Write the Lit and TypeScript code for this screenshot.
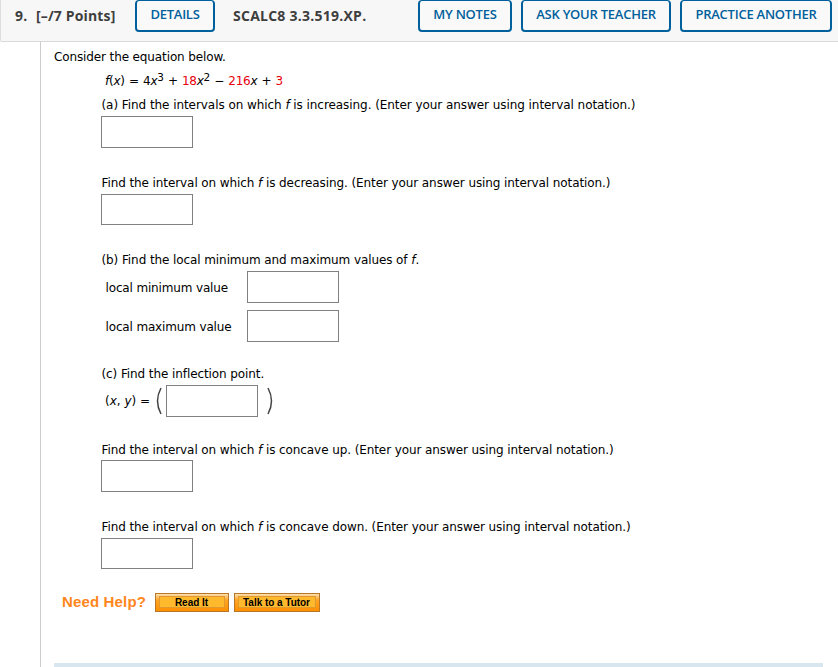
import { LitElement, html, css } from 'lit';
import { customElement, property } from 'lit/decorators.js';

@customElement('answer-box')
export class AnswerBox extends LitElement {
  @property({ type: Boolean, reflect: true }) short = false;

  static styles = css`
    :host {
      display: block;
      flex: none;
      width: 92px;
      height: 32px;
    }

    :host([short]) {
      height: 31px;
    }

    input {
      display: block;
      box-sizing: border-box;
      width: 100%;
      height: 100%;
      margin: 0;
      padding: 2px 4px;
      border: 1px solid #808080;
      border-radius: 0;
      background: #fff;
      font: 12px 'DejaVu Sans', sans-serif;
    }
  `;

  render() {
    return html`<input type="text" />`;
  }
}

@customElement('app-root')
export class AppRoot extends LitElement {
  static styles = css`
    :host {
      display: flex;
      flex-direction: column;
      height: 667px;
      overflow: hidden;
      background: #fff;
      color: #000;
      font: 12px/18px Verdana, 'DejaVu Sans', sans-serif;
      letter-spacing: -0.09px;
    }

    header {
      display: flex;
      flex: none;
      align-items: flex-start;
      box-sizing: border-box;
      height: 42px;
      padding-left: 14px;
      border-left: 1px solid #ddd;
      border-bottom: 1px solid #d8d8d8;
      border-bottom-left-radius: 2px;
      background: #f7f7f7;
      color: #3e3e3e;
      font: bold 14px/32px 'Open Sans', sans-serif;
      letter-spacing: 0.15px;
      white-space: nowrap;
    }

    .number {
      width: 21px;
    }

    .points {
      width: 99px;
    }

    .source {
      width: 185px;
      margin-left: 18px;
      letter-spacing: 0.25px;
    }

    .btn {
      box-sizing: border-box;
      height: 32px;
      margin: 0;
      padding: 0 0 3px;
      border: 2px solid #00609c;
      border-top-width: 1px;
      border-radius: 4px;
      background: #f9f9f9;
      color: #00609c;
      font: 600 13px/26px 'Open Sans', sans-serif;
      letter-spacing: -0.24px;
    }

    .details {
      width: 80px;
    }

    .notes {
      width: 94px;
    }

    .teacher {
      width: 150px;
      margin-left: 9px;
    }

    .practice {
      width: 152px;
      margin-left: 9px;
    }

    main {
      display: flex;
      flex: 1;
      flex-direction: column;
      box-sizing: border-box;
      margin-left: 40px;
      padding: 6px 15px 0 13px;
      border-left: 1px solid #ccc;
      white-space: nowrap;
    }

    p {
      margin: 0;
    }

    .intro {
      letter-spacing: -0.12px;
    }

    .equation {
      margin: 6px 0 6px 51px;
      word-spacing: 0.6px;
      letter-spacing: -0.23px;
    }

    sup {
      font-size: 10.5px;
      line-height: 0;
      vertical-align: 4px;
    }

    .red {
      color: #e8000b;
    }

    .parts {
      display: flex;
      flex-direction: column;
      padding-left: 47px;
    }

    .part {
      display: flex;
      flex-direction: column;
      gap: 2px;
    }

    .part > p {
      padding-left: 0.5px;
    }

    .increasing {
      height: 78px;
      letter-spacing: -0.06px;
    }

    .decreasing {
      height: 77px;
    }

    .extrema {
      height: 114px;
    }

    .inflection {
      height: 76px;
    }

    .concave-up {
      gap: 1px;
      height: 77px;
    }

    .concave-down {
      height: 74px;
    }

    .values {
      display: grid;
      grid-template-columns: 142px 92px;
      row-gap: 7px;
      align-items: center;
      padding-left: 4px;
      letter-spacing: -0.15px;
    }

    .values span {
      padding: 2px 0 0 0.5px;
    }

    .point {
      display: flex;
      align-items: center;
      padding-left: 4px;
    }

    .lhs {
      width: 50px;
      letter-spacing: 0;
    }

    .paren {
      width: 8px;
      height: 28px;
      fill: none;
      stroke: #444;
      stroke-width: 1.5;
    }

    .paren.open {
      margin-right: 3px;
    }

    .paren.close {
      margin-left: 8px;
    }

    .help {
      display: flex;
      align-items: center;
      height: 20px;
      padding-left: 8px;
      font-family: 'Liberation Sans', Arial, sans-serif;
      font-weight: bold;
    }

    .need {
      width: 93px;
      color: #ff861c;
      font-size: 15px;
      letter-spacing: 0.15px;
    }

    .tile {
      box-sizing: border-box;
      height: 19px;
      margin: 0 5px 0 0;
      padding: 2px 3px 3px;
      border: 1px solid #b87628;
      background: linear-gradient(#fbe0b4, #ffa526 35%, #fd9000);
      color: #000;
      font: bold 10px/12px 'Liberation Sans', Arial, sans-serif;
      letter-spacing: -0.03px;
    }

    .tile span {
      display: block;
      box-sizing: border-box;
      height: 12px;
      padding-right: 1px;
      border: 1px solid #e09a30;
      background: #ffb92d;
    }

    .read {
      width: 74px;
    }

    .tutor {
      width: 86px;
    }

    .divider {
      height: 4px;
      margin-top: 51px;
      background: #d8e6f0;
    }
  `;

  render() {
    return html`
      <header>
        <span class="number">9.</span>
        <span class="points">[–/7 Points]</span>
        <button class="btn details">DETAILS</button>
        <span class="source">SCALC8 3.3.519.XP.</span>
        <button class="btn notes">MY NOTES</button>
        <button class="btn teacher">ASK YOUR TEACHER</button>
        <button class="btn practice">PRACTICE ANOTHER</button>
      </header>
      <main>
        <p class="intro">Consider the equation below.</p>
        <p class="equation">
          <i>f</i>(<i>x</i>) = 4<i>x</i><sup>3</sup> + <span class="red">18</span><i>x</i><sup>2</sup> − <span class="red">216</span><i>x</i> + <span class="red">3</span>
        </p>
        <div class="parts">
          <section class="part increasing">
            <p>(a) Find the intervals on which <i>f</i> is increasing. (Enter your answer using interval notation.)</p>
            <answer-box></answer-box>
          </section>
          <section class="part decreasing">
            <p>Find the interval on which <i>f</i> is decreasing. (Enter your answer using interval notation.)</p>
            <answer-box short></answer-box>
          </section>
          <section class="part extrema">
            <p>(b) Find the local minimum and maximum values of <i>f</i>.</p>
            <div class="values">
              <span>local minimum value</span>
              <answer-box></answer-box>
              <span>local maximum value</span>
              <answer-box></answer-box>
            </div>
          </section>
          <section class="part inflection">
            <p>(c) Find the inflection point.</p>
            <div class="point">
              <span class="lhs">(<i>x</i>, <i>y</i>) =</span>
              <svg class="paren open" viewBox="0 0 8 28"><path d="M6 1Q-1 14 6 27" /></svg>
              <answer-box></answer-box>
              <svg class="paren close" viewBox="0 0 8 28"><path d="M2 1Q9 14 2 27" /></svg>
            </div>
          </section>
          <section class="part concave-up">
            <p>Find the interval on which <i>f</i> is concave up. (Enter your answer using interval notation.)</p>
            <answer-box></answer-box>
          </section>
          <section class="part concave-down">
            <p>Find the interval on which <i>f</i> is concave down. (Enter your answer using interval notation.)</p>
            <answer-box short></answer-box>
          </section>
        </div>
        <div class="help">
          <span class="need">Need Help?</span>
          <button class="tile read"><span>Read It</span></button>
          <button class="tile tutor"><span>Talk to a Tutor</span></button>
        </div>
        <div class="divider"></div>
      </main>
    `;
  }
}
